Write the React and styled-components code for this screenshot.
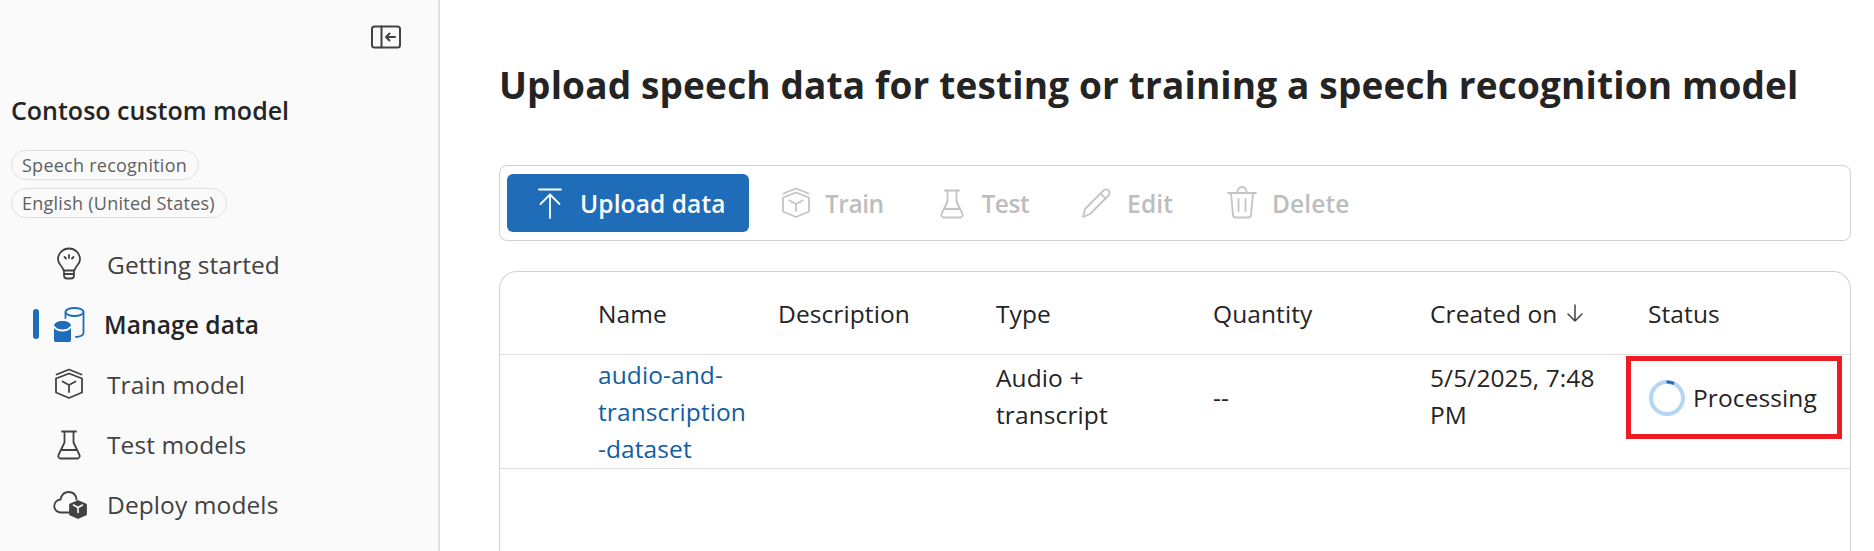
import styled, { createGlobalStyle } from 'styled-components';

const GlobalStyle = createGlobalStyle`
  html, body {
    margin: 0;
    height: 551px;
    overflow: hidden;
    background: #fff;
    font-family: 'Open Sans', 'Noto Sans', 'Liberation Sans', sans-serif;
    color: #242424;
  }
`;

const Page = styled.div`
  display: flex;
  width: 1874px;
  height: 551px;
  overflow: hidden;
`;

const Sidebar = styled.aside`
  box-sizing: border-box;
  flex: 0 0 440px;
  height: 551px;
  padding: 25px 0 0 11px;
  background: #fafafa;
  border-right: 2px solid #e0e0e0;
`;

const CollapseRow = styled.div`
  display: flex;
  justify-content: flex-end;
  padding-right: 37px;
  height: 28px;
`;

const ModelName = styled.h2`
  margin: 41px 0 0;
  font-size: 25px;
  line-height: 32px;
  font-weight: 600;
  color: #242424;
`;

const Chips = styled.div`
  display: flex;
  flex-direction: column;
  align-items: flex-start;
  gap: 8px;
  margin-top: 24px;
`;

const Chip = styled.span`
  box-sizing: border-box;
  height: 30px;
  padding: 0 11px 0 10px;
  display: flex;
  align-items: center;
  border: 1px solid #e0e0e0;
  border-radius: 15px;
  font-size: 18px;
  letter-spacing: 0.25px;
  font-weight: 500;
  color: #616161;
`;

const Nav = styled.nav`
  display: flex;
  flex-direction: column;
  margin-top: 16px;
`;

const NavRow = styled.div`
  position: relative;
  display: flex;
  align-items: center;
  height: 60px;
  padding-left: 41px;
  margin-left: -1px;
  gap: ${(p) => (p.$active ? '17px' : '20px')};
  font-size: 24.5px;
  letter-spacing: 0.1px;
  font-weight: ${(p) => (p.$active ? 600 : 400)};
  color: ${(p) => (p.$active ? '#242424' : '#424242')};

  &::before {
    content: '';
    display: ${(p) => (p.$active ? 'block' : 'none')};
    position: absolute;
    left: 23px;
    top: 15px;
    width: 6px;
    height: 30px;
    border-radius: 3px;
    background: #1f6cb9;
  }
`;

const Main = styled.main`
  flex: 1;
  padding: 0 23px 0 59px;
  min-width: 0;
`;

const Title = styled.h1`
  margin: 60px 0 0;
  font-size: 37px;
  line-height: 50px;
  font-weight: 700;
  letter-spacing: 0.15px;
  white-space: nowrap;
  color: #242424;
`;

const Toolbar = styled.div`
  box-sizing: border-box;
  display: flex;
  align-items: center;
  height: 76px;
  margin-top: 55px;
  padding-left: 7px;
  border: 1px solid #d1d1d1;
  border-radius: 8px;
`;

const PrimaryButton = styled.div`
  display: flex;
  align-items: center;
  gap: 12px;
  box-sizing: border-box;
  width: 242px;
  height: 58px;
  padding-left: 25px;
  border-radius: 6px;
  background: #1f6cb9;
  color: #fff;
  font-size: 24.5px;
  letter-spacing: 0.1px;
  font-weight: 600;
`;

const ToolButton = styled.div`
  display: flex;
  align-items: center;
  gap: ${(p) => p.$gap}px;
  margin-left: ${(p) => p.$offset}px;
  color: #bdbdbd;
  font-size: 24.5px;
  letter-spacing: ${(p) => p.$tracking || 0.1}px;
  font-weight: 600;
`;

const TableCard = styled.section`
  box-sizing: border-box;
  height: 320px;
  margin-top: 30px;
  border: 1px solid #d1d1d1;
  border-bottom: 0;
  border-radius: 18px 18px 0 0;
`;

const Row = styled.div`
  display: grid;
  grid-template-columns: 98px 180px 218px 217px 217px 218px 1fr;
  box-sizing: border-box;
  height: ${(p) => p.$height}px;
  border-bottom: 1px solid #e0e0e0;
  font-size: 24.5px;
  line-height: 37px;
  letter-spacing: 0.1px;
`;

const HeaderCell = styled.div`
  grid-column: ${(p) => p.$col};
  display: flex;
  align-items: center;
  gap: 9px;
  color: #242424;
  white-space: nowrap;
`;

const Cell = styled.div`
  grid-column: ${(p) => p.$col};
  padding-top: ${(p) => p.$top}px;
  color: #242424;
  white-space: pre-line;
`;

const CenteredCell = styled.div`
  grid-column: ${(p) => p.$col};
  display: flex;
  align-items: center;
  gap: 7px;
  height: 85px;
  white-space: nowrap;
`;

const NameLink = styled.a`
  color: #115ea3;
  text-decoration: none;
`;

const StatusHighlight = styled.div`
  position: absolute;
  left: 1626px;
  top: 356px;
  width: 216px;
  height: 83px;
  box-sizing: border-box;
  border: 5px solid #ed1c24;
`;

const Icon = ({ color = 'currentColor', children }) => (
  <svg width="36" height="36" viewBox="0 0 36 36" fill="none" stroke={color} strokeWidth="1.8" strokeLinecap="round" strokeLinejoin="round" style={{ flex: 'none' }}>
    {children}
  </svg>
);

const BulbIcon = ({ color }) => (
  <Icon color={color}>
    <path d="M12.5 24.5C12 20 7 18.5 7 13.500a11 11 0 0 1 22 0c0 5-5 6.500-5.500 11z" />
    <path d="M13 24.500v5a3 3 0 0 0 3 3h4a3 3 0 0 0 3-3v-5M13 28h10" />
    <path d="M18 9v3M13.500 11l1.500 1.500M22.500 11L21 12.500" />
  </Icon>
);

const DataIcon = () => (
  <Icon color="#1f6cb9">
    <ellipse cx="23.500" cy="6" rx="9" ry="4" />
    <path d="M14.500 6v6M32.500 6v21c0 2-3 3.500-7.500 4" />
    <path d="M3 20c0-3 3.500-5 8.500-5s8.500 2 8.500 5v14c0 2.500-3.500 4-8.500 4S3 36.500 3 34z" fill="#1f6cb9" stroke="none" />
    <path d="M3.500 21c1.500 2.500 5 3.500 8 3.500s6.500-1 8-3.500" stroke="#fafafa" />
  </Icon>
);

const CubeIcon = ({ color }) => (
  <Icon color={color}>
    <path d="M5 12.500L18 7.500l13 5v14L18 32 5 26.500z" />
    <path d="M5.500 8.500L18 3.500l12.500 5" />
    <path d="M11.500 15.500L18 19l6.500-3.500M18 19v7" />
  </Icon>
);

const FlaskIcon = ({ color }) => (
  <Icon color={color}>
    <path d="M11 5.500h14M13.500 5.500v11L7.500 29a2.500 2.500 0 0 0 2.300 3.500h16.400a2.500 2.500 0 0 0 2.300-3.500l-6-12.500v-11" />
    <path d="M10.500 24h15" />
  </Icon>
);

const CloudIcon = () => (
  <Icon>
    <path d="M18 26.500H10a6.500 6.500 0 0 1-.5-13c1-4.500 4-7.500 8-7.500 4.500 0 7.500 3 8 7.500" />
    <path d="M27 15l8 3.500v10L27 32l-8-3.500v-10z" fill="#424242" stroke="#424242" />
    <path d="M22.500 19l4.500 2.500 4.500-2.500M27 21.500v5" stroke="#fafafa" strokeWidth="1.600" />
  </Icon>
);

const UploadIcon = () => (
  <Icon color="#fff">
    <path d="M7 4.500h22M18 33V9.500M8.500 19L18 9.500l9.500 9.500" />
  </Icon>
);

const PencilIcon = ({ color }) => (
  <Icon color={color}>
    <path d="M5 32l2-8L25.500 5.500a3.500 3.500 0 0 1 5 5L12 29z" />
    <path d="M22.500 8.500l5 5" />
  </Icon>
);

const TrashIcon = ({ color }) => (
  <Icon color={color}>
    <path d="M4 8h28M13.500 8V6.500a4.500 4.500 0 0 1 9 0V8" />
    <path d="M7 8l2 22a3 3 0 0 0 3 2.500h12a3 3 0 0 0 3-2.500l2-22" />
    <path d="M14.500 14v12M21.500 14v12" />
  </Icon>
);

const CollapseIcon = () => (
  <svg width="30" height="24" viewBox="0 0 30 24" fill="none" stroke="#424242" strokeWidth="2" strokeLinecap="round" strokeLinejoin="round">
    <rect x="1" y="1.500" width="28" height="21" rx="2.500" />
    <path d="M10.500 1.500v21" />
    <path d="M24 12h-9M18.500 8.500L15 12l3.500 3.500" />
  </svg>
);

const SortArrow = () => (
  <svg width="18" height="20" viewBox="0 0 18 20" fill="none" stroke="#424242" strokeWidth="1.500" strokeLinecap="round" strokeLinejoin="round">
    <path d="M9 2v16M2 11l7 7 7-7" />
  </svg>
);

const Spinner = () => (
  <svg width="38" height="38" viewBox="0 0 38 38" fill="none" style={{ flex: 'none' }}>
    <circle cx="19" cy="19" r="16" stroke="#b5d5f5" strokeWidth="4" />
    <path d="M18.500 3a16 16 0 0 1 7.500 1.600" stroke="#1f6cb9" strokeWidth="3" />
  </svg>
);

const navItems = [
  { label: 'Getting started', icon: <BulbIcon color="#424242" /> },
  { label: 'Manage data', icon: <DataIcon />, active: true },
  { label: 'Train model', icon: <CubeIcon color="#424242" /> },
  { label: 'Test models', icon: <FlaskIcon color="#424242" /> },
  { label: 'Deploy models', icon: <CloudIcon /> },
];

const headers = ['Name', 'Description', 'Type', 'Quantity', 'Created on', 'Status'];

export default function App() {
  return (
    <Page>
      <GlobalStyle />
      <Sidebar>
        <CollapseRow>
          <CollapseIcon />
        </CollapseRow>
        <ModelName>Contoso custom model</ModelName>
        <Chips>
          <Chip>Speech recognition</Chip>
          <Chip>English (United States)</Chip>
        </Chips>
        <Nav>
          {navItems.map((item) => (
            <NavRow key={item.label} $active={item.active}>
              {item.icon}
              {item.label}
            </NavRow>
          ))}
        </Nav>
      </Sidebar>
      <Main>
        <Title>Upload speech data for testing or training a speech recognition model</Title>
        <Toolbar>
          <PrimaryButton>
            <UploadIcon />
            Upload data
          </PrimaryButton>
          <ToolButton $offset={29} $gap={11} $tracking={-0.5}>
            <CubeIcon color="#c4c4c4" />
            Train
          </ToolButton>
          <ToolButton $offset={50} $gap={12} $tracking={-0.5}>
            <FlaskIcon color="#c4c4c4" />
            Test
          </ToolButton>
          <ToolButton $offset={49} $gap={13}>
            <PencilIcon color="#c4c4c4" />
            Edit
          </ToolButton>
          <ToolButton $offset={51} $gap={12}>
            <TrashIcon color="#c4c4c4" />
            Delete
          </ToolButton>
        </Toolbar>
        <TableCard>
          <Row $height={83}>
            {headers.map((h, i) => (
              <HeaderCell key={h} $col={i + 2}>
                {h}
                {h === 'Created on' && <SortArrow />}
              </HeaderCell>
            ))}
          </Row>
          <Row $height={114}>
            <Cell $col={2} $top={1}>
              <NameLink>{'audio-and-\ntranscription\n-dataset'}</NameLink>
            </Cell>
            <Cell $col={4} $top={4}>{'Audio +\ntranscript'}</Cell>
            <CenteredCell $col={5}>--</CenteredCell>
            <Cell $col={6} $top={4}>{'5/5/2025, 7:48\nPM'}</Cell>
            <CenteredCell $col={7}>
              <Spinner />
              Processing
            </CenteredCell>
          </Row>
        </TableCard>
      </Main>
      <StatusHighlight />
    </Page>
  );
}
